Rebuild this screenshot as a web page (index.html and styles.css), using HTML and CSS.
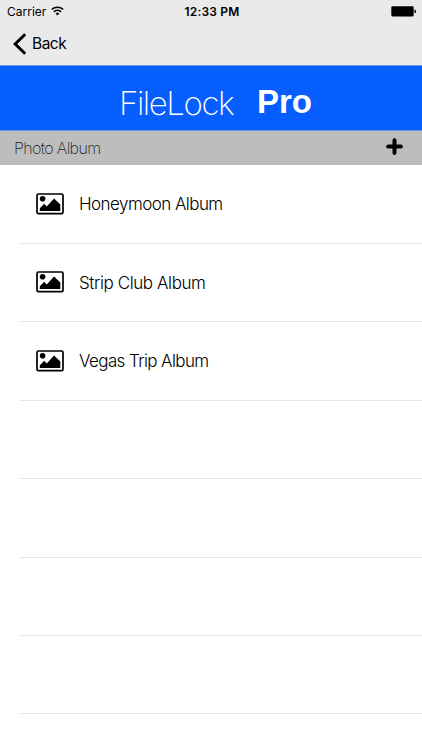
FILE: index.html
```html
<!DOCTYPE html>
<html lang="en">
<head>
<meta charset="utf-8">
<meta name="viewport" content="width=device-width">
<title>FileLock Pro</title>
<link rel="stylesheet" href="styles.css">
</head>
<body>
<svg class="defs" aria-hidden="true">
  <symbol id="photo" viewBox="0 0 28 22">
    <rect x="1" y="1" width="26" height="19.6" rx="1.4" fill="none" stroke="#000" stroke-width="1.7"/>
    <circle cx="6.6" cy="5.7" r="2.8"/>
    <path d="M3.8 18v-2.8l4.4-4.4 2.5 2.6 7.4-7.8 6.2 5.8V18z"/>
  </symbol>
</svg>
<header class="top">
  <div class="status">
    <div class="carrier"><span class="carrier-name">Carrier</span>
      <svg class="wifi" width="13" height="10" viewBox="0 0 13 10"><g fill="none" stroke="#000" stroke-width="1.6"><path d="M.8 3.5a8.3 8.3 0 0 1 11.4 0"/><path d="M2.9 5.8a5.2 5.2 0 0 1 7.2 0"/></g><path d="M4.6 7.5a2.8 2.8 0 0 1 3.8 0L6.5 9.4z"/></svg>
    </div>
    <span class="time">12:33 PM</span>
    <svg class="battery" width="26" height="11" viewBox="0 0 26 11"><rect x="0.3" y="0.3" width="22.4" height="10.2" rx="1.4"/><path d="M23.5 3.7h.6q1 0 1 1.7t-1 1.7h-.6z"/></svg>
  </div>
  <nav class="nav">
    <svg width="14" height="22" viewBox="0 0 14 22"><path d="M12.2 1.2 2.2 11l10 9.8" fill="none" stroke="#000" stroke-width="3"/></svg>
    <span class="back">Back</span>
  </nav>
</header>
<div class="banner"><span class="brand">FileLock</span><span class="pro">Pro</span></div>
<div class="section">
  <span class="section-title">Photo Album</span>
  <svg class="plus" width="17" height="17" viewBox="0 0 17 17"><path d="M8.5 1.5v14M1.5 8.5h14" fill="none" stroke="#000" stroke-width="4"/><path d="M8.5 1.5v14M1.5 8.5h14" fill="none" stroke="#000" stroke-width="3" stroke-linecap="round"/></svg>
</div>
<main class="list">
  <div class="row"><svg class="photo"><use href="#photo"/></svg><span class="name honeymoon">Honeymoon Album</span></div>
  <div class="row"><svg class="photo"><use href="#photo"/></svg><span class="name strip">Strip Club Album</span></div>
  <div class="row"><svg class="photo"><use href="#photo"/></svg><span class="name vegas">Vegas Trip Album</span></div>
  <div class="row"></div>
  <div class="row"></div>
  <div class="row"></div>
  <div class="row"></div>
</main>
</body>
</html>
```
FILE: styles.css
```css
* { box-sizing: border-box; }
body { margin: 0; height: 750px; overflow: hidden; background: #fff; color: #000; font-family: Inter, "Liberation Sans", sans-serif; }
svg { display: block; flex: none; }
.defs { position: absolute; width: 0; height: 0; }
.top { height: 66px; background: #eaeaea; border-bottom: 1px solid #6b96e6; }
.status { display: grid; grid-template-columns: 1fr auto 1fr; align-items: center; height: 22px; padding: 0 5px 0 7px; }
.carrier { display: flex; align-items: center; gap: 5px; font-size: 12px; letter-spacing: 0; }
.carrier-name { width: 39px; }
.time { font-size: 12px; font-weight: 600; letter-spacing: .2px; }
.battery { justify-self: end; }
.nav { display: flex; align-items: center; gap: 5px; height: 43px; padding-left: 13px; }
.back { font-size: 15.5px; line-height: 20px; padding-top: 1px; letter-spacing: -.5px; }
.banner { display: flex; align-items: flex-start; height: 65px; padding: 17px 0 0 119px; background: #075eff; color: #fff; line-height: 40px; white-space: nowrap; border-bottom: 1px solid #6f98e0; }
.brand { width: 138px; font-size: 33px; font-weight: 200; letter-spacing: -1.45px; }
.pro { margin-top: -1px; font: bold 33px/40px "Liberation Sans", sans-serif; letter-spacing: 0; }
.section { display: flex; align-items: center; justify-content: space-between; height: 34px; padding: 0 19px 0 14px; background: #bdbdbd; }
.section-title { font-size: 16px; font-weight: 250; letter-spacing: -.65px; color: #222; }
.plus { margin-bottom: 3px; }
.list { padding-top: .6px; }
.row { display: flex; align-items: center; gap: 15px; height: 78.4px; margin-left: 20px; padding-left: 16px; border-bottom: 1px solid #e6e6e6; }
.photo { width: 28px; height: 22px; margin-bottom: 1px; }
.name { font-size: 17px; font-weight: 300; letter-spacing: -.55px; }
.strip { letter-spacing: -.4px; }
.vegas { letter-spacing: -.6px; }
```
